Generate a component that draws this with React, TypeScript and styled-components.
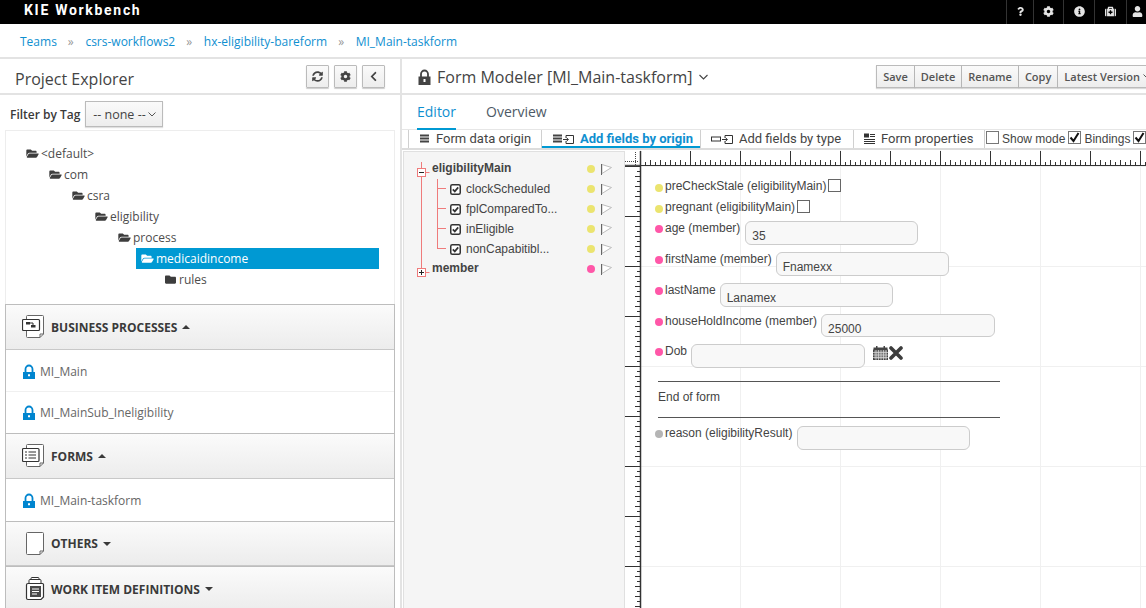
import React from "react";
import styled, { createGlobalStyle } from "styled-components";
import {
  FaChevronLeft,
  FaCog,
  FaFolder,
  FaFolderOpen,
  FaInfoCircle,
  FaMedkit,
  FaQuestion,
  FaSyncAlt,
  FaUser,
} from "react-icons/fa";

const GlobalStyle = createGlobalStyle`
  html, body {
    margin: 0;
    height: 100%;
    overflow: hidden;
    background: #fff;
  }
  body {
    font-family: "Open Sans", "Liberation Sans", sans-serif;
    color: #444;
  }
  * {
    box-sizing: border-box;
  }
`;

const Page = styled.div`
  width: 1146px;
  height: 608px;
  display: flex;
  flex-direction: column;
  overflow: hidden;
  white-space: nowrap;
`;

const TopBar = styled.header`
  flex: none;
  height: 24px;
  background: #000;
  display: flex;
  align-items: center;
  justify-content: space-between;
  padding-left: 24px;
  overflow: hidden;
`;

const Brand = styled.div`
  font-family: "Roboto", sans-serif;
  font-weight: 700;
  font-size: 14px;
  letter-spacing: 1.7px;
  color: #fff;
  padding-bottom: 4px;
`;

const TopIcons = styled.div`
  display: flex;
  height: 24px;
  margin-right: -1px;
`;

const TopIcon = styled.div<{ $w: number }>`
  width: ${(p) => p.$w}px;
  border-left: 1px solid #333;
  color: #e4e4e4;
  font-size: 11px;
  padding-bottom: 2px;
  display: flex;
  align-items: center;
  justify-content: center;
`;

const Crumbs = styled.nav`
  flex: none;
  height: 35px;
  border-bottom: 2px solid #e3e3e3;
  display: flex;
  align-items: center;
  padding: 2px 0 0 20px;
  font-size: 12px;
  color: #0f8fd0;
`;

const CrumbSep = styled.span`
  color: #999;
  font-size: 12px;
  margin: 0 11.6px 0 11px;
`;

const Body = styled.div`
  flex: 1;
  display: flex;
  min-height: 0;
`;

const LeftPanel = styled.aside`
  flex: none;
  width: 400px;
  display: flex;
  flex-direction: column;
`;

const PanelHead = styled.div`
  flex: none;
  height: 36px;
  border-bottom: 2px solid #e3e3e3;
  display: flex;
  align-items: center;
  justify-content: space-between;
  padding: 0 15px;
`;

const Title = styled.h2`
  margin: 6px 0 0;
  font-size: 16px;
  font-weight: 400;
  color: #444;
`;

const HeadButtons = styled.div`
  display: flex;
  gap: 5px;
`;

const IconButton = styled.button`
  width: 23px;
  height: 23px;
  padding: 0;
  border: 1px solid #bbb;
  border-radius: 1px;
  background: linear-gradient(#fafafa, #ededed);
  box-shadow: 0 1px 1px rgba(0, 0, 0, 0.2);
  display: flex;
  align-items: center;
  justify-content: center;
  color: #444;
  font-size: 11px;
`;

const FilterRow = styled.div`
  flex: none;
  height: 35px;
  padding: 3px 0 0 10px;
  display: flex;
  align-items: center;
  gap: 5px;
  font-size: 12px;
  font-weight: 600;
  color: #3a3a3a;
`;

const TagSelect = styled.div`
  width: 78px;
  height: 26px;
  border: 1px solid #bbb;
  background: linear-gradient(#fafafa, #ededed);
  box-shadow: 0 1px 1px rgba(0, 0, 0, 0.12);
  display: flex;
  align-items: center;
  justify-content: center;
  gap: 2px;
  font-size: 12.5px;
  font-weight: 400;
  color: #444;
`;

const PackageBox = styled.div`
  flex: none;
  height: 174px;
  margin: 0 5px;
  border: 1px solid #ededed;
  border-bottom: none;
  padding-top: 12px;
  overflow: hidden;
`;

const TreeLine = styled.div<{ $level: number; $selected?: boolean }>`
  height: 21px;
  display: flex;
  align-items: center;
  gap: 2px;
  font-size: 12px;
  padding-left: ${(p) => 20 + p.$level * 23 - (p.$selected ? 130 : 0)}px;
  margin-left: ${(p) => (p.$selected ? 130 : 0)}px;
  margin-right: ${(p) => (p.$selected ? 15 : 0)}px;
  background: ${(p) => (p.$selected ? "#0099d3" : "transparent")};
  color: ${(p) => (p.$selected ? "#fff" : "#4d4d4d")};
  & svg {
    flex: none;
    width: 13px;
    height: 11px;
    color: ${(p) => (p.$selected ? "#fff" : "#3d3d3d")};
  }
`;

const Sections = styled.div`
  flex: 1;
  margin: 0 5px;
  border: solid #bdbdbd;
  border-width: 0 1px;
  overflow: hidden;
`;

const SectionHead = styled.div<{ $h: number }>`
  height: ${(p) => p.$h}px;
  background: linear-gradient(#fbfbfb, #ececec);
  border-top: 1px solid #bdbdbd;
  border-bottom: 1px solid #c8c8c8;
  display: flex;
  align-items: center;
  padding-left: 16px;
  gap: 5px;
  font-size: 12px;
  font-weight: 700;
  color: #3a3a3a;
`;

const Caret = styled.span<{ $up?: boolean }>`
  width: 0;
  height: 0;
  border-left: 4px solid transparent;
  border-right: 4px solid transparent;
  ${(p) =>
    p.$up ? "border-bottom: 4px solid #3a3a3a;" : "border-top: 4px solid #3a3a3a;"}
`;

const AssetRow = styled.div<{ $h?: number }>`
  height: ${(p) => p.$h ?? 41}px;
  display: flex;
  align-items: center;
  gap: 5px;
  padding: 1px 0 0 17px;
  font-size: 12px;
  color: #666;
  & + & {
    border-top: 1px solid #f0f0f0;
    height: 42px;
    padding-top: 0;
  }
`;

const RightPanel = styled.main`
  flex: 1;
  min-width: 0;
  display: flex;
  flex-direction: column;
  border-left: 2px solid #e3e3e3;
`;

const EditorHead = styled.div`
  flex: none;
  height: 36px;
  border-bottom: 2px solid #e3e3e3;
  display: flex;
  align-items: center;
  justify-content: space-between;
  padding-left: 16px;
`;

const EditorTitle = styled.h2`
  margin: 2px 0 0;
  display: flex;
  align-items: center;
  gap: 6px;
  font-size: 16px;
  font-weight: 400;
  color: #444;
`;

const ButtonGroup = styled.div`
  flex: none;
  display: flex;
  margin-right: -12px;
`;

const GroupButton = styled.button`
  height: 23px;
  padding: 0 6px;
  border: 1px solid #bbb;
  border-left-width: 0;
  background: linear-gradient(#fafafa, #ededed);
  box-shadow: 0 1px 1px rgba(0, 0, 0, 0.15);
  font-family: inherit;
  font-size: 11px;
  font-weight: 600;
  color: #555;
  display: flex;
  align-items: center;
  gap: 3px;
  &:first-child {
    border-left-width: 1px;
  }
`;

const Tabs = styled.div`
  flex: none;
  height: 35px;
  border-bottom: 1px solid #e6e6e6;
  display: flex;
  gap: 30px;
  padding-left: 15px;
`;

const Tab = styled.div<{ $active?: boolean }>`
  height: 35px;
  padding-top: 7px;
  font-size: 14px;
  color: ${(p) => (p.$active ? "#0f8fd0" : "#4d5a66")};
  border-bottom: ${(p) => (p.$active ? "2px solid #0099d3" : "none")};
`;

const ToolBar = styled.div`
  flex: none;
  height: 20px;
  border-bottom: 2px solid #dcdcdc;
  display: flex;
  padding-left: 6px;
  font-family: "Roboto", "Liberation Sans", sans-serif;
  font-size: 13px;
  color: #444;
`;

const ToolItem = styled.div<{ $w: number; $active?: boolean }>`
  flex: none;
  width: ${(p) => p.$w}px;
  height: 18px;
  border-left: 1px solid #d0d0d0;
  display: flex;
  align-items: center;
  padding: 0 0 2px 10px;
  gap: 6px;
  font-weight: ${(p) => (p.$active ? 700 : 400)};
  color: ${(p) => (p.$active ? "#0f8fd0" : "#444")};
  box-shadow: ${(p) => (p.$active ? "inset 0 -2px 0 #0099d3" : "none")};
`;

const ToolChecks = styled.div`
  flex: none;
  height: 18px;
  display: flex;
  border-left: 1px solid #d0d0d0;
  padding-left: 1px;
`;

const ToolCheck = styled.label`
  display: flex;
  align-items: center;
  gap: 3px;
  margin-right: 3px;
  font-size: 12px;
  font-family: "Liberation Sans", sans-serif;
`;

const CheckMark = styled.span`
  width: 13px;
  height: 13px;
  flex: none;
  margin-top: -3px;
  border: 1px solid #777;
  background: #fff;
  display: inline-flex;
  align-items: center;
  justify-content: center;
`;

const Workspace = styled.div`
  flex: 1;
  display: flex;
  min-height: 0;
`;

const FieldPane = styled.div`
  flex: none;
  position: relative;
  width: 222px;
  margin-left: 1px;
  margin-top: 1px;
  background: #f5f5f5;
  border: solid #e0e0e0;
  border-width: 1px 1px 0 1px;
  padding: 7px 0 0 28px;
  font-family: "Liberation Sans", sans-serif;
  font-size: 12px;
  color: #444;
`;

const Connectors = styled.svg`
  position: absolute;
  left: 0;
  top: 0;
`;

const NodeRow = styled.div<{ $child?: boolean }>`
  height: 20px;
  display: flex;
  align-items: center;
  padding-left: ${(p) => (p.$child ? 18 : 0)}px;
  gap: 5px;
  font-weight: ${(p) => (p.$child ? 400 : 700)};
  position: relative;
  & > span:first-of-type {
    padding-bottom: ${(p) => (p.$child ? 0 : 3)}px;
  }
`;

const NodeMarks = styled.div`
  position: absolute;
  left: 155px;
  top: 0;
  height: 20px;
  display: flex;
  align-items: center;
  gap: 6px;
`;

const Dot = styled.span<{ $color: string }>`
  display: inline-block;
  flex: none;
  width: 8px;
  height: 8px;
  border-radius: 50%;
  background: ${(p) => p.$color};
`;

const CheckDot = styled(Dot)`
  margin-top: 5px;
`;

const FieldDot = styled(Dot)`
  margin-top: 2px;
`;

const Canvas = styled.div`
  flex: 1;
  position: relative;
  overflow: hidden;
  padding: 26px 0 0 30px;
  font-family: "Liberation Sans", sans-serif;
  font-size: 12px;
  color: #444;
  background-color: #fff;
  background-image: linear-gradient(#f0f0f0 1px, transparent 1px),
    linear-gradient(90deg, #f0f0f0 1px, transparent 1px);
  background-size: 100px 100px;
  background-position: 0 16px, 15px 0;
`;

const Rulers = styled.svg`
  position: absolute;
  left: 0;
  top: 0;
`;

const CheckField = styled.div`
  height: 21px;
  padding-bottom: 2px;
  display: flex;
  align-items: center;
  gap: 2px;
`;

const Box = styled.span`
  width: 13px;
  height: 13px;
  border: 1px solid #666;
  background: #fff;
`;

const InputField = styled.div<{ $tight?: boolean }>`
  height: ${(p) => (p.$tight ? 23 : 24)}px;
  margin-bottom: 7px;
  display: flex;
  align-items: flex-start;
`;

const FieldLabel = styled.span<{ $gap: number }>`
  display: flex;
  align-items: center;
  gap: 2px;
  height: 14px;
  margin-right: ${(p) => p.$gap}px;
`;

const InputBox = styled.div<{ $w: number }>`
  width: ${(p) => p.$w}px;
  height: 100%;
  border: 1px solid #ccc;
  border-radius: 6px;
  background: #f8f8f8;
  padding: 7px 0 0 6px;
  line-height: 15px;
  font-size: 12px;
  color: #444;
`;

const DobIcons = styled.span`
  display: flex;
  align-items: center;
  height: 15px;
  margin-left: 8px;
  margin-top: 1px;
  gap: 1px;
`;

const Spacer = styled.div<{ $h: number }>`
  height: ${(p) => p.$h}px;
`;

const Rule = styled.hr`
  width: 342px;
  margin: 0 0 0 3px;
  border: none;
  border-top: 1px solid #555;
`;

const EndText = styled.div`
  height: 35px;
  padding: 8px 0 0 3px;
  line-height: 14px;
`;

const BlueLock = () => (
  <svg width="12" height="15" viewBox="0 0 12 15">
    <path d="M2.500 8V5a3.500 3.500 0 0 1 7 0v3" fill="none" stroke="#0085cf" strokeWidth="1.800" />
    <path d="M0 8h12v7H0z M5 10.200v2h2v-2z" fill="#0085cf" fillRule="evenodd" />
  </svg>
);

const DarkLock = () => (
  <svg width="13" height="16" viewBox="0 0 13 16">
    <path d="M3 8V5a3.500 3.500 0 0 1 7 0v3" fill="none" stroke="#444" strokeWidth="1.800" />
    <path d="M0.500 7.500h12V16H0.500z M5.500 10v3h2v-3z" fill="#444" fillRule="evenodd" />
  </svg>
);

const PageFold = () => (
  <>
    <path
      d="M5.500 0.500h15a1 1 0 0 1 1 1V19l-3.500 3.500H5.500a1 1 0 0 1-1-1v-20a1 1 0 0 1 1-1z"
      fill="#fff"
      stroke="#666"
    />
    <path d="M21.500 19H18v3.500" fill="none" stroke="#666" />
  </>
);

const ProcessIcon = () => (
  <svg width="24" height="24" viewBox="0 0 24 24">
    <PageFold />
    <rect x="0.500" y="4.500" width="17" height="11" rx="1" fill="#fff" stroke="#333" strokeWidth="1.200" />
    <path d="M4 7h4v2.500H4z M9 10h4.500v2.500H9z" fill="#333" />
    <path d="M8 8h3v2" fill="none" stroke="#333" />
  </svg>
);

const FormIcon = () => (
  <svg width="24" height="24" viewBox="0 0 24 24">
    <PageFold />
    <rect x="0.500" y="4.500" width="16.500" height="13" rx="1" fill="#fff" stroke="#333" strokeWidth="1.200" />
    <path d="M3 8h2M6.500 8H14M3 11h2M6.500 11H14M3 14h2M6.500 14H14" stroke="#333" strokeWidth="1.200" />
  </svg>
);

const OtherIcon = () => (
  <svg width="24" height="24" viewBox="0 0 24 24">
    <PageFold />
  </svg>
);

const WorkItemIcon = () => (
  <svg width="24" height="24" viewBox="0 0 24 24">
    <rect x="9" y="0.500" width="8" height="5" rx="1" fill="#fff" stroke="#333" />
    <rect x="7" y="2.500" width="12" height="5" rx="1" fill="#fff" stroke="#333" />
    <path d="M6 6.500h14.500a1 1 0 0 1 1 1V20l-2.500 2.500H6a1.500 1.500 0 0 1-1.500-1.500V8A1.500 1.500 0 0 1 6 6.500z" fill="#fff" stroke="#333" strokeWidth="1.200" />
    <path d="M8 9h11v11H8z" fill="#4a4a4a" />
    <path d="M10 12h7M10 14.500h7M10 17h5" stroke="#fff" />
  </svg>
);

const TreeCheck = () => (
  <svg width="11" height="11" viewBox="0 0 11 11" style={{ flex: "none" }}>
    <rect x="0.750" y="0.750" width="9.500" height="9.500" rx="1.500" fill="#fff" stroke="#333" strokeWidth="1.500" />
    <path d="M2.800 5.400l2 2 3.400-4" fill="none" stroke="#333" strokeWidth="1.700" />
  </svg>
);

const Flag = () => (
  <svg width="11" height="11" viewBox="0 0 11 11" style={{ flex: "none" }}>
    <path d="M1 0.500l9.500 3L1 9.500z" fill="#fff" stroke="#bdbdbd" />
    <path d="M0.500 0v11" stroke="#666" />
  </svg>
);

const Tick = () => (
  <svg width="11" height="11" viewBox="0 0 11 11">
    <path d="M1.500 5.500l3 3.500 5-8" fill="none" stroke="#111" strokeWidth="2" />
  </svg>
);

const Stack = () => (
  <path d="M1 1.500h9v2H1zM1 4.500h9v2H1zM1 7.500h9v2H1z" fill="#444" />
);

const InBox = () => (
  <g fill="none" stroke="#333">
    <path d="M14 2.500h7.500v8H14V8" />
    <path d="M14 2.500V5" />
    <path d="M11 6.500h5M14.500 4.800l2 1.700-2 1.700" />
  </g>
);

const DataIcon = () => (
  <svg width="11" height="11" viewBox="0 0 11 11" style={{ flex: "none" }}>
    <Stack />
  </svg>
);

const OriginIcon = () => (
  <svg width="22" height="11" viewBox="0 0 22 11" style={{ flex: "none" }}>
    <Stack />
    <InBox />
  </svg>
);

const TypeIcon = () => (
  <svg width="22" height="11" viewBox="0 0 22 11" style={{ flex: "none" }}>
    <rect x="0.500" y="4" width="9" height="4" fill="none" stroke="#333" />
    <InBox />
  </svg>
);

const PropsIcon = () => (
  <svg width="11" height="11" viewBox="0 0 11 11" style={{ flex: "none" }}>
    <path d="M0 0.500h5v4H0z M6 1h5v1H6zM6 3h5v1H6zM0 6h11v1H0zM0 8h11v1H0zM0 10h11v1H0z" fill="#333" />
  </svg>
);

const Calendar = () => (
  <svg width="15" height="14" viewBox="0 0 15 14" style={{ flex: "none" }}>
    <path d="M0.500 1.500h14V4h-14z" fill="#444" />
    <path d="M3 0h1.500v2H3zM10.500 0H12v2h-1.500z" fill="#444" />
    <rect x="0.500" y="4" width="14" height="9.500" fill="#777" stroke="#444" />
    <path d="M3 4v10M5.500 4v10M8 4v10M10.500 4v10M13 4v10M0 6.500h15M0 9h15M0 11.500h15" stroke="#ddd" strokeWidth="0.700" />
  </svg>
);

const ClearX = () => (
  <svg width="14" height="14" viewBox="0 0 14 14" style={{ flex: "none" }}>
    <path d="M2 2l10 10M12 2L2 12" stroke="#3d3d3d" strokeWidth="3.600" strokeLinecap="round" />
  </svg>
);

const tickRange = (count: number) => Array.from({ length: count }, (_, i) => i);

// top ruler ticks sit on a 5px step, each 50px one runs the full ruler height
const topTick = (i: number) => (i % 10 === 0 ? 1 : i % 2 === 0 ? 10 : 12);
const sideTick = (i: number) => (i % 10 === 0 ? 0 : i % 2 === 0 ? 10 : 12);

const CanvasRulers = () => (
  <Rulers width="521" height="458">
    <rect x="0" y="0" width="15" height="15" fill="#fff" />
    <path d="M0 11.500h14M10.500 2v13" stroke="#444" strokeDasharray="1 1" fill="none" />
    <path d="M15 15.500h506" stroke="#333" fill="none" />
    <path d="M0 15.500h15" stroke="#555" strokeWidth="1.500" fill="none" />
    <path d="M15.500 1v457" stroke="#333" strokeWidth="1.500" fill="none" />
    {tickRange(102).map((i) => (
      <path key={i} d={`M${15.5 + i * 5} ${topTick(i)}V15`} stroke="#333" />
    ))}
    {tickRange(90).map((i) => (
      <path key={i} d={`M${sideTick(i)} ${16.5 + i * 5}H15`} stroke="#333" />
    ))}
  </Rulers>
);

const explorer = [
  { name: "<default>", level: 0 },
  { name: "com", level: 1 },
  { name: "csra", level: 2 },
  { name: "eligibility", level: 3 },
  { name: "process", level: 4 },
];

const childFields = ["clockScheduled", "fplComparedTo...", "inEligible", "nonCapabitibl..."];

const YELLOW = "#ebe46f";
const PINK = "#ff57a8";

function FieldLine({
  color,
  label,
  gap,
  width,
  value,
  tight,
}: {
  color: string;
  label: string;
  gap: number;
  width: number;
  value?: string;
  tight?: boolean;
}) {
  return (
    <InputField $tight={tight}>
      <FieldLabel $gap={gap}>
        <FieldDot $color={color} />
        {label}
      </FieldLabel>
      <InputBox $w={width}>{value}</InputBox>
    </InputField>
  );
}

export default function App() {
  return (
    <Page>
      <GlobalStyle />
      <TopBar>
        <Brand>KIE Workbench</Brand>
        <TopIcons>
          <TopIcon $w={27}><FaQuestion size={9} /></TopIcon>
          <TopIcon $w={30}><FaCog /></TopIcon>
          <TopIcon $w={31}><FaInfoCircle /></TopIcon>
          <TopIcon $w={32}><FaMedkit /></TopIcon>
          <TopIcon $w={21}><FaUser /></TopIcon>
        </TopIcons>
      </TopBar>

      <Crumbs>
        Teams<CrumbSep>»</CrumbSep>
        csrs-workflows2<CrumbSep>»</CrumbSep>
        hx-eligibility-bareform<CrumbSep>»</CrumbSep>
        MI_Main-taskform
      </Crumbs>

      <Body>
        <LeftPanel>
          <PanelHead>
            <Title>Project Explorer</Title>
            <HeadButtons>
              <IconButton><FaSyncAlt /></IconButton>
              <IconButton><FaCog /></IconButton>
              <IconButton><FaChevronLeft /></IconButton>
            </HeadButtons>
          </PanelHead>
          <FilterRow>
            Filter by Tag
            <TagSelect>
              -- none --
              <svg width="8" height="5" viewBox="0 0 8 5">
                <path d="M0.500 0.500L4 4l3.500-3.500" fill="none" stroke="#555" />
              </svg>
            </TagSelect>
          </FilterRow>
          <PackageBox>
            {explorer.map((row) => (
              <TreeLine key={row.name} $level={row.level}>
                <FaFolderOpen />
                {row.name}
              </TreeLine>
            ))}
            <TreeLine $level={5} $selected>
              <FaFolderOpen />
              medicaidincome
            </TreeLine>
            <TreeLine $level={6}>
              <FaFolder />
              rules
            </TreeLine>
          </PackageBox>
          <Sections>
            <SectionHead $h={46}>
              <ProcessIcon />
              BUSINESS PROCESSES
              <Caret $up />
            </SectionHead>
            <AssetRow><BlueLock />MI_Main</AssetRow>
            <AssetRow><BlueLock />MI_MainSub_Ineligibility</AssetRow>
            <SectionHead $h={46}>
              <FormIcon />
              FORMS
              <Caret $up />
            </SectionHead>
            <AssetRow $h={42}><BlueLock />MI_Main-taskform</AssetRow>
            <SectionHead $h={45}>
              <OtherIcon />
              OTHERS
              <Caret />
            </SectionHead>
            <SectionHead $h={46}>
              <WorkItemIcon />
              WORK ITEM DEFINITIONS
              <Caret />
            </SectionHead>
          </Sections>
        </LeftPanel>

        <RightPanel>
          <EditorHead>
            <EditorTitle>
              <DarkLock />
              Form Modeler [MI_Main-taskform]
              <svg width="9" height="6" viewBox="0 0 9 6">
                <path d="M0.500 1L4.500 5l4-4" fill="none" stroke="#444" strokeWidth="1.100" />
              </svg>
            </EditorTitle>
            <ButtonGroup>
              <GroupButton>Save</GroupButton>
              <GroupButton>Delete</GroupButton>
              <GroupButton>Rename</GroupButton>
              <GroupButton>Copy</GroupButton>
              <GroupButton>
                Latest Version
                <svg width="8" height="5" viewBox="0 0 8 5">
                  <path d="M0.500 0.500L4 4l3.500-3.500" fill="none" stroke="#555" />
                </svg>
              </GroupButton>
            </ButtonGroup>
          </EditorHead>
          <Tabs>
            <Tab $active>Editor</Tab>
            <Tab>Overview</Tab>
          </Tabs>
          <ToolBar>
            <ToolItem $w={133}><DataIcon />Form data origin</ToolItem>
            <ToolItem $w={159} $active><OriginIcon />Add fields by origin</ToolItem>
            <ToolItem $w={153}><TypeIcon />Add fields by type</ToolItem>
            <ToolItem $w={131}><PropsIcon />Form properties</ToolItem>
            <ToolChecks>
              <ToolCheck><CheckMark />Show mode</ToolCheck>
              <ToolCheck><CheckMark><Tick /></CheckMark>Bindings</ToolCheck>
              <ToolCheck><CheckMark><Tick /></CheckMark></ToolCheck>
            </ToolChecks>
          </ToolBar>
          <Workspace>
            <FieldPane>
              <Connectors width="60" height="130">
                <path d="M17.500 10v106M33.500 27v70" stroke="#ef7b7b" fill="none" />
                {[36, 56, 76, 96].map((y) => (
                  <path key={y} d={`M33 ${y + 0.5}h9`} stroke="#ef7b7b" />
                ))}
                <path d="M21.500 20.500h4M21.500 120.500h4" stroke="#ef7b7b" />
                <rect x="13.500" y="16.500" width="8" height="8" fill="#fff" stroke="#ef7b7b" />
                <path d="M15 20.500h5" stroke="#222" />
                <rect x="13.500" y="116.500" width="8" height="8" fill="#fff" stroke="#ef7b7b" />
                <path d="M15 120.500h5M17.500 118v5" stroke="#222" />
              </Connectors>
              <NodeRow>
                <span>eligibilityMain</span>
                <NodeMarks><Dot $color={YELLOW} /><Flag /></NodeMarks>
              </NodeRow>
              {childFields.map((name) => (
                <NodeRow key={name} $child>
                  <TreeCheck />
                  <span>{name}</span>
                  <NodeMarks><Dot $color={YELLOW} /><Flag /></NodeMarks>
                </NodeRow>
              ))}
              <NodeRow>
                <span>member</span>
                <NodeMarks><Dot $color={PINK} /><Flag /></NodeMarks>
              </NodeRow>
            </FieldPane>
            <Canvas>
              <CanvasRulers />
              <CheckField>
                <CheckDot $color={YELLOW} />
                preCheckStale (eligibilityMain)
                <Box />
              </CheckField>
              <CheckField>
                <CheckDot $color={YELLOW} />
                pregnant (eligibilityMain)
                <Box />
              </CheckField>
              <Spacer $h={3} />
              <FieldLine color={PINK} label="age (member)" gap={5} width={173} value="35" />
              <FieldLine color={PINK} label="firstName (member)" gap={4} width={173} value="Fnamexx" />
              <FieldLine color={PINK} label="lastName" gap={4} width={173} value="Lanamex" />
              <FieldLine color={PINK} label="houseHoldIncome (member)" gap={4} width={174} value="25000" tight />
              <InputField>
                <FieldLabel $gap={4}>
                  <FieldDot $color={PINK} />
                  Dob
                </FieldLabel>
                <InputBox $w={174} />
                <DobIcons>
                  <Calendar />
                  <ClearX />
                </DobIcons>
              </InputField>
              <Spacer $h={6} />
              <Rule />
              <EndText>End of form</EndText>
              <Rule />
              <Spacer $h={8} />
              <FieldLine color="#b5b5b5" label="reason (eligibilityResult)" gap={5} width={173} />
            </Canvas>
          </Workspace>
        </RightPanel>
      </Body>
    </Page>
  );
}
